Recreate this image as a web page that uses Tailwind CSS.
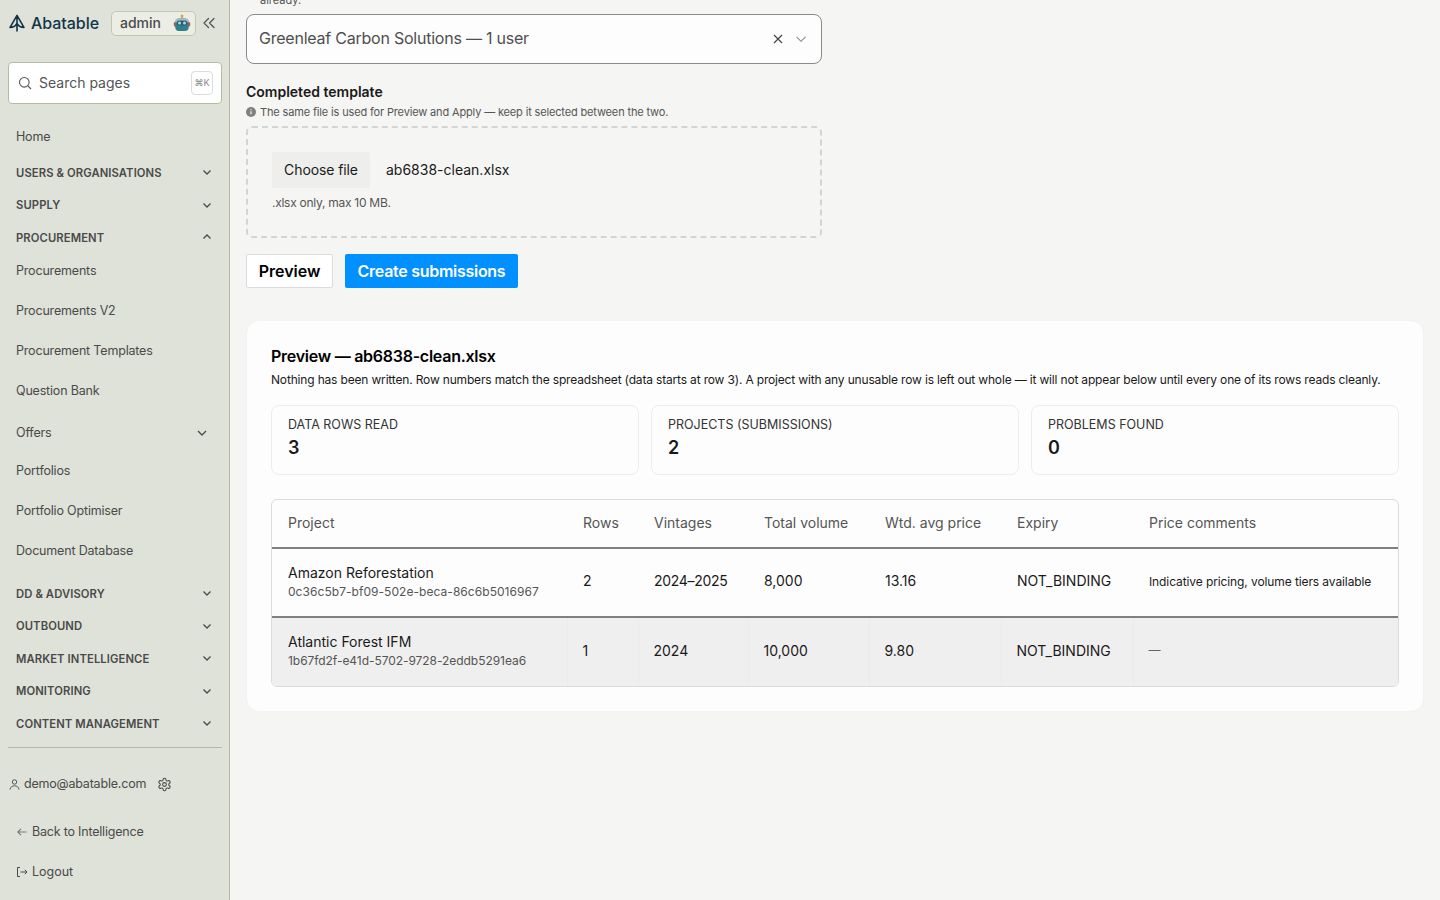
<!DOCTYPE html>
<html lang="en">
<head>
  <meta charset="UTF-8" />
  <title>Bulk upload</title>
  <script src="https://cdn.jsdelivr.net/npm/@tailwindcss/browser@4"></script>
</head>
<body class="h-[900px] overflow-hidden bg-[#f5f5f3] font-['Inter',sans-serif] text-[#1a1a1a] flex">

<!-- Sidebar -->
<aside class="w-[230px] h-[900px] shrink-0 bg-[#dfe2d8] border-r border-[#b5baa3] pl-2 pr-[7px] text-[#4a4a4a]">
  <div class="h-[46px] flex items-center">
    <svg class="w-[16px] h-[18px] ml-[1px] text-[#12344a]" viewBox="0 0 18 20" fill="none" stroke="currentColor" stroke-width="1.800" stroke-linejoin="round" stroke-linecap="round">
      <path d="M9 1.500 1.200 15C5 15 7.500 13.500 9 10.500 10.500 13.500 13 15 16.800 15ZM9 1.500V19"/>
    </svg>
    <span class="ml-[6px] w-[69px] text-[16px] font-medium tracking-[-0.05px] text-[#12344a]">Abatable</span>
    <span class="ml-[11px] w-[85px] h-[25px] rounded-[5px] border border-[#c3c7b2] bg-[#eceee6] flex items-center justify-between pl-[8px] pr-[4px] pb-[1px] text-[14px] font-medium text-[#4a4a4a]">admin
      <svg class="w-[18px] h-[18px]" viewBox="0 0 18 18">
        <circle cx="9" cy="2" r="1.500" fill="#e8a33a"/>
        <rect x="8.400" y="3" width="1.200" height="2" fill="#8a8f96"/>
        <rect x="0.800" y="8" width="2" height="4.500" rx="1" fill="#c0564a"/>
        <rect x="15.200" y="8" width="2" height="4.500" rx="1" fill="#c0564a"/>
        <rect x="2.200" y="4.500" width="13.600" height="12.500" rx="4" fill="#2f7f8f"/>
        <path d="M2.200 8.500a4 4 0 0 1 4-4h5.600a4 4 0 0 1 4 4z" fill="#a9bcc4"/>
        <rect x="3.600" y="6.500" width="10.800" height="5" rx="2.500" fill="#3a5a6a"/>
        <circle cx="6.500" cy="9" r="1.500" fill="#8fe6f0"/>
        <circle cx="11.500" cy="9" r="1.500" fill="#8fe6f0"/>
      </svg>
    </span>
    <svg class="ml-[6px] w-[14px] h-[14px] text-[#555]" viewBox="0 0 14 14" fill="none" stroke="currentColor" stroke-width="1.300" stroke-linecap="round" stroke-linejoin="round"><path d="M6.500 2.500 2 7l4.500 4.500M12 2.500 7.500 7l4.500 4.500"/></svg>
  </div>
  <div class="mt-[16px] h-[42px] bg-white rounded-[4px] border border-[#b5baa3] flex items-center pl-[9px] pr-[8px]">
    <svg class="w-[14px] h-[14px] text-[#555]" viewBox="0 0 14 14" fill="none" stroke="currentColor" stroke-width="1.100"><circle cx="6.300" cy="6.300" r="4.800"/><path d="m10 10 3 3"/></svg>
    <span class="ml-[7px] mb-[2px] text-[14px] text-[#555]">Search pages</span>
    <span class="ml-auto w-[22px] h-[24px] rounded-[4px] border border-[#dcdcdc] flex items-center justify-center text-[9px] text-[#8a8a8a]">⌘K</span>
  </div>

  <nav class="mt-[15px] mr-[1px] text-[12.5px] tracking-[-0.18px]">
    <div class="h-[36px] pl-[8px] flex items-center">Home</div>
    <div class="h-[32px] pl-[8px] pr-[8px] mt-[1px] flex items-center justify-between text-[11.250px] font-semibold tracking-[0.1px]"><span class="translate-y-[1px]">USERS &amp; ORGANISATIONS</span>
      <svg class="w-[12px] h-[12px]" viewBox="0 0 12 12" fill="none" stroke="currentColor" stroke-width="1.300"><path d="m2.500 4.500 3.500 3.500 3.500-3.500"/></svg></div>
    <div class="h-[33px] pl-[8px] pr-[8px] flex items-center justify-between text-[11.250px] font-semibold tracking-[0.1px]"><span class="translate-y-[1px]">SUPPLY</span>
      <svg class="w-[12px] h-[12px]" viewBox="0 0 12 12" fill="none" stroke="currentColor" stroke-width="1.300"><path d="m2.500 4.500 3.500 3.500 3.500-3.500"/></svg></div>
    <div class="h-[32px] pl-[8px] pr-[8px] flex items-center justify-between text-[11.250px] font-semibold tracking-[0.1px]"><span class="translate-y-[1px]">PROCUREMENT</span>
      <svg class="w-[12px] h-[12px]" viewBox="0 0 12 12" fill="none" stroke="currentColor" stroke-width="1.300"><path d="m2.500 7.500 3.500-3.500 3.500 3.500"/></svg></div>
    <div class="h-[40px] pl-[8px] mt-[-2px] flex items-center">Procurements</div>
    <div class="h-[40px] pl-[8px] flex items-center">Procurements V2</div>
    <div class="h-[40px] pl-[8px] flex items-center">Procurement Templates</div>
    <div class="h-[40px] pl-[8px] flex items-center">Question Bank</div>
    <div class="h-[40px] pl-[8px] pr-[12px] mt-[2px] flex items-center justify-between">Offers
      <svg class="w-[14px] h-[14px]" viewBox="0 0 14 14" fill="none" stroke="currentColor" stroke-width="1.300"><path d="m3 5 4 4 4-4"/></svg></div>
    <div class="h-[40px] pl-[8px] mt-[-2px] flex items-center">Portfolios</div>
    <div class="h-[40px] pl-[8px] flex items-center">Portfolio Optimiser</div>
    <div class="h-[40px] pl-[8px] flex items-center">Document Database</div>
    <div class="h-[32.500px] pl-[8px] pr-[8px] mt-[6px] flex items-center justify-between text-[11.250px] font-semibold tracking-[0.1px]"><span class="translate-y-[1px]">DD &amp; ADVISORY</span>
      <svg class="w-[12px] h-[12px]" viewBox="0 0 12 12" fill="none" stroke="currentColor" stroke-width="1.300"><path d="m2.500 4.500 3.500 3.500 3.500-3.500"/></svg></div>
    <div class="h-[32.500px] pl-[8px] pr-[8px] flex items-center justify-between text-[11.250px] font-semibold tracking-[0.1px]"><span class="translate-y-[1px]">OUTBOUND</span>
      <svg class="w-[12px] h-[12px]" viewBox="0 0 12 12" fill="none" stroke="currentColor" stroke-width="1.300"><path d="m2.500 4.500 3.500 3.500 3.500-3.500"/></svg></div>
    <div class="h-[32.500px] pl-[8px] pr-[8px] flex items-center justify-between text-[11.250px] font-semibold tracking-[0.1px]"><span class="translate-y-[1px]">MARKET INTELLIGENCE</span>
      <svg class="w-[12px] h-[12px]" viewBox="0 0 12 12" fill="none" stroke="currentColor" stroke-width="1.300"><path d="m2.500 4.500 3.500 3.500 3.500-3.500"/></svg></div>
    <div class="h-[32.500px] pl-[8px] pr-[8px] flex items-center justify-between text-[11.250px] font-semibold tracking-[0.1px]"><span class="translate-y-[1px]">MONITORING</span>
      <svg class="w-[12px] h-[12px]" viewBox="0 0 12 12" fill="none" stroke="currentColor" stroke-width="1.300"><path d="m2.500 4.500 3.500 3.500 3.500-3.500"/></svg></div>
    <div class="h-[32px] pl-[8px] pr-[8px] flex items-center justify-between text-[11.250px] font-semibold tracking-[0.1px]"><span class="translate-y-[1px]">CONTENT MANAGEMENT</span>
      <svg class="w-[12px] h-[12px]" viewBox="0 0 12 12" fill="none" stroke="currentColor" stroke-width="1.300"><path d="m2.500 4.500 3.500 3.500 3.500-3.500"/></svg></div>
  </nav>

  <div class="mt-[8px] border-t border-[#b5baa3]"></div>

  <div class="mt-[26px] h-[20px] flex items-center text-[12.5px] tracking-[-0.2px]">
    <svg class="w-[13px] h-[13px]" viewBox="0 0 13 13" fill="none" stroke="currentColor" stroke-width="0.900"><circle cx="6.500" cy="4" r="2.200"/><path d="M2 11.500c.4-2.600 2.200-3.700 4.500-3.700s4.100 1.100 4.500 3.700"/></svg>
    <span class="ml-[3px]">demo@abatable.com</span>
    <svg class="ml-[11px] w-[15px] h-[15px]" viewBox="0 0 24 24" fill="none" stroke="currentColor" stroke-width="1.700" stroke-linecap="round" stroke-linejoin="round"><path d="M12.220 2h-.44a2 2 0 0 0-2 2v.18a2 2 0 0 1-1 1.730l-.43.25a2 2 0 0 1-2 0l-.15-.08a2 2 0 0 0-2.730.73l-.22.38a2 2 0 0 0 .73 2.730l.15.1a2 2 0 0 1 1 1.720v.51a2 2 0 0 1-1 1.740l-.15.09a2 2 0 0 0-.73 2.730l.22.38a2 2 0 0 0 2.730.73l.15-.08a2 2 0 0 1 2 0l.43.25a2 2 0 0 1 1 1.730V20a2 2 0 0 0 2 2h.44a2 2 0 0 0 2-2v-.18a2 2 0 0 1 1-1.730l.43-.25a2 2 0 0 1 2 0l.15.08a2 2 0 0 0 2.730-.73l.22-.39a2 2 0 0 0-.73-2.730l-.15-.08a2 2 0 0 1-1-1.740v-.5a2 2 0 0 1 1-1.740l.15-.09a2 2 0 0 0 .73-2.730l-.22-.38a2 2 0 0 0-2.730-.73l-.15.08a2 2 0 0 1-2 0l-.43-.25a2 2 0 0 1-1-1.730V4a2 2 0 0 0-2-2z"/><circle cx="12" cy="12" r="3"/></svg>
  </div>
  <div class="mt-[28px] h-[20px] pl-[8px] flex items-center text-[12.5px] tracking-[-0.2px]">
    <svg class="w-[12px] h-[12px] text-[#777]" viewBox="0 0 12 12" fill="none" stroke="currentColor" stroke-width="1.100"><path d="M10.500 6H1.800M5 2.800 1.800 6 5 9.200"/></svg>
    <span class="ml-[4px]">Back to Intelligence</span>
  </div>
  <div class="mt-[20px] h-[20px] pl-[8px] flex items-center text-[12.5px]">
    <svg class="w-[12px] h-[12px]" viewBox="0 0 12 12" fill="none" stroke="currentColor" stroke-width="1"><path d="M4 1.500H1.500v9H4M4.500 6H11M8.800 3.800 11 6 8.800 8.200"/></svg>
    <span class="ml-[4px]">Logout</span>
  </div>
</aside>

<!-- Main -->
<main class="flex-1 min-w-0 h-[900px] overflow-hidden pl-[16px] pr-[17px]">
  <div class="mt-[-7px] h-[14px] pl-[14px] text-[11px] leading-[14px] text-[#555]">already.</div>
  <div class="mt-[7px] w-[576px] h-[50px] rounded-[8px] border border-[#8a8a8a] bg-[#fdfdfd] flex items-center pl-[12px] pr-[14px]">
    <span class="mb-[2px] text-[16px] tracking-[-0.23px] text-[#4f4f4f]">Greenleaf Carbon Solutions — 1 user</span>
    <svg class="ml-auto w-[12px] h-[12px] text-[#444]" viewBox="0 0 12 12" fill="none" stroke="currentColor" stroke-width="1.200"><path d="m2 2 8 8M10 2l-8 8"/></svg>
    <svg class="ml-[11px] w-[12px] h-[12px] text-[#8a8a8a]" viewBox="0 0 12 12" fill="none" stroke="currentColor" stroke-width="1.100"><path d="m1.500 3.800 4.500 4.500 4.500-4.500"/></svg>
  </div>

  <div class="mt-[19px] text-[14px] leading-[18px] font-semibold">Completed template</div>
  <div class="mt-[4px] h-[14px] flex items-center text-[11px] tracking-[-0.15px] text-[#555]">
    <svg class="w-[10px] h-[10px] text-[#808080]" viewBox="0 0 10 10"><circle cx="5" cy="5" r="5" fill="currentColor"/><path d="M5 4.300v3M5 2.300v1" stroke="#f5f5f3" stroke-width="1.200"/></svg>
    <span class="ml-[4px]">The same file is used for Preview and Apply — keep it selected between the two.</span>
  </div>
  <div class="mt-[7px] w-[576px] h-[112px] rounded-[6px] border-2 border-dashed border-[#d4d4d4] pl-[24px] pt-[24px]">
    <div class="flex items-center">
      <span class="h-[36px] w-[98px] pb-[2px] rounded-[2px] bg-[#eeefec] flex items-center justify-center text-[14px] tracking-[-0.1px]">Choose file</span>
      <span class="ml-[16px] mb-[2px] text-[14px]">ab6838-clean.xlsx</span>
    </div>
    <div class="mt-[7px] text-[12px] leading-[16px] tracking-[-0.27px] text-[#555]">.xlsx only, max 10 MB.</div>
  </div>
  <div class="mt-[16px] flex gap-[12px]">
    <span class="h-[34px] w-[87px] rounded-[2px] border border-[#dcdcdc] bg-white flex items-center justify-center text-[16px] font-semibold text-black">Preview</span>
    <span class="h-[34px] w-[173px] rounded-[2px] bg-[#0090ff] flex items-center justify-center text-[16px] font-semibold tracking-[-0.28px] text-white">Create submissions</span>
  </div>

  <section class="mt-[33px] ml-[1px] h-[390px] rounded-[12px] bg-[#fdfdfd] shadow-[0_0_2px_rgba(0,0,0,0.06)] px-[24px] pt-[24px]">
    <h2 class="text-[16px] leading-[22px] font-semibold tracking-[-0.26px] text-black">Preview — ab6838-clean.xlsx</h2>
    <p class="mt-[5px] text-[12px] leading-[16px] tracking-[-0.17px] whitespace-nowrap">Nothing has been written. Row numbers match the spreadsheet (data starts at row 3). A project with any unusable row is left out whole — it will not appear below until every one of its rows reads cleanly.</p>

    <div class="mt-[17px] grid grid-cols-3 gap-[12px]">
      <div class="h-[70px] rounded-[8px] border border-[#ececec] pl-[16px] pt-[11px]">
        <div class="text-[12.5px] leading-[16px] text-[#333]">DATA ROWS READ</div>
        <div class="mt-[3px] text-[18px] leading-[24px] font-semibold">3</div>
      </div>
      <div class="h-[70px] rounded-[8px] border border-[#ececec] pl-[16px] pt-[11px]">
        <div class="text-[12.5px] leading-[16px] text-[#333]">PROJECTS (SUBMISSIONS)</div>
        <div class="mt-[3px] text-[18px] leading-[24px] font-semibold">2</div>
      </div>
      <div class="h-[70px] rounded-[8px] border border-[#ececec] pl-[16px] pt-[11px]">
        <div class="text-[12.5px] leading-[16px] text-[#333]">PROBLEMS FOUND</div>
        <div class="mt-[3px] text-[18px] leading-[24px] font-semibold">0</div>
      </div>
    </div>

    <div class="mt-[24px] rounded-[6px] border border-[#dcdcdc] overflow-hidden">
      <table class="w-full table-fixed border-collapse text-left text-[14px]">
        <colgroup>
          <col class="w-[295px]" /><col class="w-[71px]" /><col class="w-[110px]" /><col class="w-[121px]" /><col class="w-[132px]" /><col class="w-[132px]" /><col />
        </colgroup>
        <thead>
          <tr class="h-[48px] border-b-2 border-[#808080] text-[#555]">
            <th class="pl-[16px] pb-[2px] font-normal">Project</th>
            <th class="pl-[16px] pb-[2px] font-normal">Rows</th>
            <th class="pl-[16px] pb-[2px] font-normal">Vintages</th>
            <th class="pl-[16px] pb-[2px] font-normal">Total volume</th>
            <th class="pl-[16px] pb-[2px] font-normal">Wtd. avg price</th>
            <th class="pl-[16px] pb-[2px] font-normal">Expiry</th>
            <th class="pl-[16px] pb-[2px] font-normal">Price comments</th>
          </tr>
        </thead>
        <tbody>
          <tr class="h-[69px] border-b-2 border-[#808080]">
            <td class="pl-[16px] pb-[1px]"><div class="leading-[18px]">Amazon Reforestation</div><div class="mt-[2px] text-[12px] leading-[16px] tracking-[0.05px] text-[#555]">0c36c5b7-bf09-502e-beca-86c6b5016967</div></td>
            <td class="pl-[16px] pb-[4px]">2</td>
            <td class="pl-[16px] pb-[4px] tracking-[-0.3px]">2024–2025</td>
            <td class="pl-[16px] pb-[4px]">8,000</td>
            <td class="pl-[16px] pb-[4px]">13.16</td>
            <td class="pl-[16px] pb-[4px]">NOT_BINDING</td>
            <td class="pl-[16px] pb-[2px] text-[12px] tracking-[-0.1px] whitespace-nowrap">Indicative pricing, volume tiers available</td>
          </tr>
          <tr class="h-[69px] bg-[#efefef]">
            <td class="pl-[16px] pb-[2px]"><div class="leading-[18px]">Atlantic Forest IFM</div><div class="mt-[2px] text-[12px] leading-[16px] tracking-[-0.05px] text-[#555]">1b67fd2f-e41d-5702-9728-2eddb5291ea6</div></td>
            <td class="pl-[15px] pb-[4px] border-l border-[#ebebeb]">1</td>
            <td class="pl-[15px] pb-[4px] border-l border-[#ebebeb]">2024</td>
            <td class="pl-[15px] pb-[4px] border-l border-[#ebebeb]">10,000</td>
            <td class="pl-[15px] pb-[4px] border-l border-[#ebebeb]">9.80</td>
            <td class="pl-[15px] pb-[4px] border-l border-[#ebebeb]">NOT_BINDING</td>
            <td class="pl-[15px] pb-[4px] border-l border-[#ebebeb] text-[12px] text-[#666]">—</td>
          </tr>
        </tbody>
      </table>
    </div>
  </section>
</main>
</body>
</html>
